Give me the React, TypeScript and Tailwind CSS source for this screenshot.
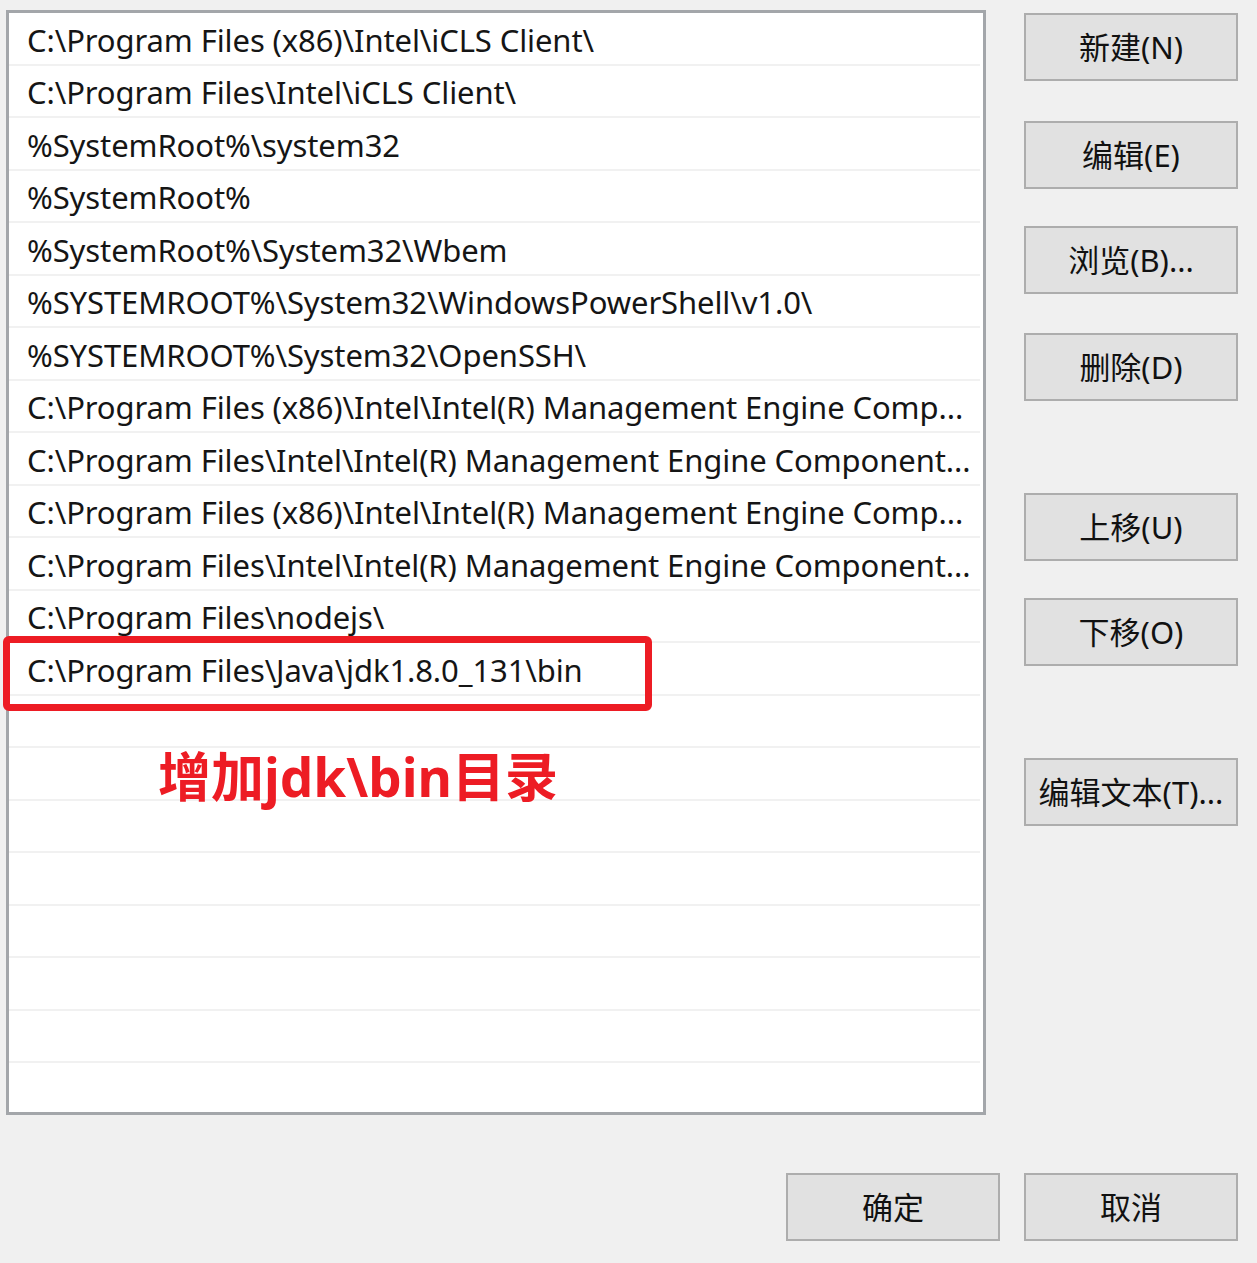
const paths = [
  'C:\\Program Files (x86)\\Intel\\iCLS Client\\',
  'C:\\Program Files\\Intel\\iCLS Client\\',
  '%SystemRoot%\\system32',
  '%SystemRoot%',
  '%SystemRoot%\\System32\\Wbem',
  '%SYSTEMROOT%\\System32\\WindowsPowerShell\\v1.0\\',
  '%SYSTEMROOT%\\System32\\OpenSSH\\',
  'C:\\Program Files (x86)\\Intel\\Intel(R) Management Engine Comp...',
  'C:\\Program Files\\Intel\\Intel(R) Management Engine Component...',
  'C:\\Program Files (x86)\\Intel\\Intel(R) Management Engine Comp...',
  'C:\\Program Files\\Intel\\Intel(R) Management Engine Component...',
  'C:\\Program Files\\nodejs\\',
  'C:\\Program Files\\Java\\jdk1.8.0_131\\bin',
];

const rows = [...paths, ...Array(21 - paths.length).fill('')];

function WinButton({label}: {label: string}) {
  return (
    <button className="w-[214px] h-[68px] bg-[#e1e1e1] border-2 border-[#adadad] text-[31px] text-[#111] flex items-center justify-center">
      {label}
    </button>
  );
}

export default function App() {
  return (
    <div
      className="relative w-[1257px] h-[1263px] bg-[#f0f0f0] overflow-hidden"
      style={{fontFamily: '"Noto Sans", "Noto Sans CJK SC", sans-serif'}}
    >
      <div className="flex pt-[10px] pl-[6px]">
        <div className="w-[980px] h-[1105px] bg-white border-[3px] border-[#a3a6aa] flex flex-col overflow-hidden">
          {rows.map((p, i) => (
            <div
              key={i}
              className="h-[52.5px] shrink-0 border-b-2 border-[#f1f1f1] mr-[3px] flex items-center pl-[18px] pt-[3px]"
            >
              <span className="whitespace-nowrap text-[31px] tracking-[-0.1px] text-[#151515] leading-[1.3]">{p}</span>
            </div>
          ))}
        </div>

        <div className="flex flex-col ml-[38px] pt-[3px]">
          <WinButton label="新建(N)" />
          <div className="mt-[40px]"><WinButton label="编辑(E)" /></div>
          <div className="mt-[37px]"><WinButton label="浏览(B)..." /></div>
          <div className="mt-[39px]"><WinButton label="删除(D)" /></div>
          <div className="mt-[92px]"><WinButton label="上移(U)" /></div>
          <div className="mt-[37px]"><WinButton label="下移(O)" /></div>
          <div className="mt-[92px]"><WinButton label="编辑文本(T)..." /></div>
        </div>
      </div>

      <div className="flex justify-end gap-[24px] pr-[19px] mt-[58px]">
        <WinButton label="确定" />
        <WinButton label="取消" />
      </div>

      {/* annotation overlay */}
      <div className="absolute left-[3px] top-[636px] w-[649px] h-[75px] border-[7px] border-[#ed1c24] rounded-[6px]" />
      <div className="absolute left-[158px] top-[750px] text-[53px] font-bold leading-none text-[#ed1c24]">
        增加jdk\bin目录
      </div>
    </div>
  );
}
